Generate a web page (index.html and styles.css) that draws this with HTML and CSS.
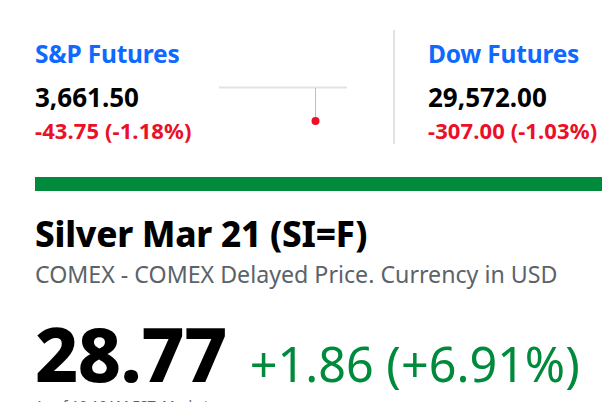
FILE: index.html
```html
<!DOCTYPE html>
<html>
<head>
<meta charset="utf-8">
<link rel="stylesheet" href="styles.css">
</head>
<body>
<div class="page">
  <div class="tickers">
    <div class="ticker ticker-first">
      <div class="t-name">S&amp;P Futures</div>
      <div class="t-price">3,661.50</div>
      <div class="t-change">-43.75 (-1.18%)</div>
    </div>
    <svg class="spark" width="130" height="50" viewBox="0 0 130 50">
      <line x1="0" y1="1.5" x2="128" y2="1.5" stroke="#e3e3e3" stroke-width="2"/>
      <line x1="96.5" y1="2" x2="96.5" y2="34" stroke="#f4a7b2" stroke-width="1"/>
      <circle cx="96.5" cy="35" r="4" fill="#eb0f29"/>
    </svg>
    <div class="divider"></div>
    <div class="ticker">
      <div class="t-name">Dow Futures</div>
      <div class="t-price">29,572.00</div>
      <div class="t-change">-307.00 (-1.03%)</div>
    </div>
  </div>
  <div class="bar"></div>
  <div class="quote-head">
    <div class="titles">
      <h1 class="title">Silver Mar 21 (SI=F)</h1>
      <div class="subtitle">COMEX - COMEX Delayed Price. Currency in USD</div>
    </div>
    <div class="follow"></div>
  </div>
  <div class="price-row">
    <span class="price">28.77</span>
    <span class="change">+1.86 (+6.91%)</span>
  </div>
  <div class="note">As of 10:19AM EST. Market open.</div>
</div>
</body>
</html>
```
FILE: styles.css
```css
html, body {
  margin: 0;
  padding: 0;
  background: #fff;
  overflow: hidden;
}
.page {
  font-family: "Noto Sans", "Open Sans", sans-serif;
  padding-left: 35px;
  width: 602px;
  box-sizing: border-box;
}
.tickers {
  display: flex;
  align-items: flex-start;
  padding-top: 30px;
  height: 114px;
  white-space: nowrap;
}
.ticker {
  display: flex;
  flex-direction: column;
}
.ticker-first {
  width: 158px;
  flex: none;
}
.t-name {
  color: #0f69ff;
  font-weight: 700;
  font-size: 24.5px;
  line-height: 30px;
  margin-top: 8.5px;
  letter-spacing: -0.2px;
}
.t-price {
  color: #000;
  font-weight: 700;
  font-size: 26px;
  line-height: 30px;
  margin-top: 13px;
}
.t-change {
  color: #eb0f29;
  font-weight: 700;
  font-size: 22px;
  line-height: 26px;
  margin-top: 5px;
  letter-spacing: 0.1px;
}
.spark {
  margin-left: 26px;
  margin-top: 56px;
  display: block;
  flex: none;
}
.divider {
  width: 2px;
  height: 114px;
  background: #e0e4e9;
  margin-left: 44px;
  margin-right: 33px;
  flex: none;
}
.bar {
  height: 14px;
  background: #008a3b;
  margin-top: 33px;
}
.quote-head {
  display: flex;
  justify-content: space-between;
  align-items: flex-start;
  margin-top: 21px;
}
.title {
  margin: 0;
  font-size: 35px;
  font-weight: 800;
  line-height: 44px;
  color: #000;
  letter-spacing: -0.2px;
  white-space: nowrap;
}
.subtitle {
  color: #5b636a;
  font-size: 23.2px;
  line-height: 28px;
  margin-top: 4px;
  white-space: nowrap;
}
.follow {
  width: 36px;
  height: 24px;
  border: 2px solid #0f69ff;
  border-radius: 14px;
  margin-top: 26px;
  margin-right: -41px;
  flex: none;
}
.price-row {
  display: flex;
  align-items: baseline;
  margin-top: 25px;
  white-space: nowrap;
  height: 74px;
}
.price {
  font-size: 75px;
  font-weight: 800;
  line-height: 80px;
  color: #000;
  letter-spacing: -0.6px;
}
.change {
  font-size: 48.5px;
  line-height: 60px;
  color: #008a3b;
  margin-left: 23px;
  letter-spacing: 0;
}
.note {
  color: #5b636a;
  font-size: 14px;
  line-height: 18px;
  margin-top: 10px;
}
```
